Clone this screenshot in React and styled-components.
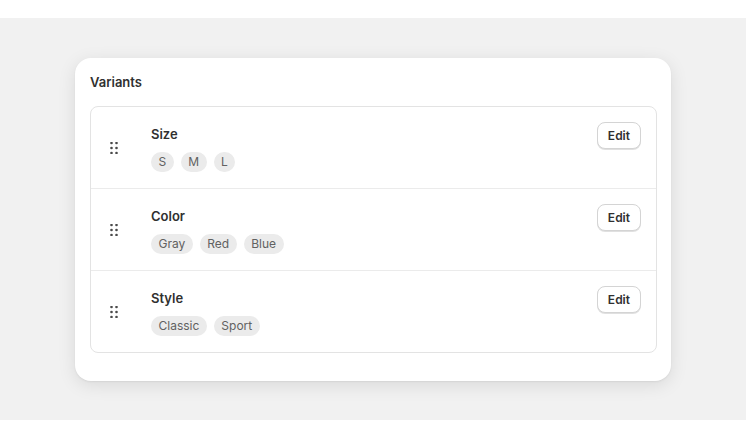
import React from "react";
import styled, { createGlobalStyle } from "styled-components";

const Global = createGlobalStyle`
  body { margin:0; background:#fff; font-family: Inter, "Noto Sans", sans-serif; }
`;
const Band = styled.div`
  margin-top:18px; height:402px; background:#f1f1f1;
  display:flex; justify-content:center; padding-top:40px; box-sizing:border-box;
`;
const Card = styled.div`
  width:596px; height:323px; box-sizing:border-box; background:#fff; border-radius:16px;
  box-shadow:0 4px 18px rgba(0,0,0,0.10), 0 1px 2px rgba(0,0,0,0.06);
  padding:15px 14px 0 15px;
`;
const Title = styled.div`font-size:13px; font-weight:600; color:#303030; line-height:16px; margin-top:1px; margin-bottom:16px;`;
const List = styled.div`border:1px solid #e3e3e3; border-radius:8px;`;
const Row = styled.div`
  height:81px; display:flex; align-items:center; padding:0 15px 0 19px;
  & + & { border-top:1px solid #ebebeb; }
`;
const Handle = styled.div`width:41px; display:flex; align-items:center;`;
const Body = styled.div`flex:1; display:flex; flex-direction:column; gap:10px; padding-top:3px;`;
const Name = styled.div`font-size:13px; font-weight:600; color:#303030; line-height:16px;`;
const Tags = styled.div`display:flex; gap:7px;`;
const Tag = styled.span`
  background:#ebebeb; color:#616161; font-size:12px; border-radius:10px;
  height:20px; line-height:20px; padding:0 7.5px;
`;
const Btn = styled.button`
  align-self:flex-start; margin-top:15px; font-family:inherit; font-size:12px; font-weight:600; color:#303030;
  background:#fff; border:1px solid #d4d4d4; border-radius:8px; height:27px; padding:0 10px;
  box-shadow:0 1px 0 rgba(0,0,0,0.12);
`;

const Dots = () => (
  <svg width="8" height="12" viewBox="0 0 8 12" fill="#4a4a4a">
    {[1, 6, 11].map((y) => [1.5, 6.5].map((x) => <circle key={x + "-" + y} cx={x} cy={y} r="1.3" />))}
  </svg>
);

const data = [
  ["Size", ["S", "M", "L"]],
  ["Color", ["Gray", "Red", "Blue"]],
  ["Style", ["Classic", "Sport"]],
];

export default function App() {
  return (
    <>
      <Global />
      <Band>
        <Card>
          <Title>Variants</Title>
          <List>
            {data.map(([n, t]) => (
              <Row key={n}>
                <Handle><Dots /></Handle>
                <Body>
                  <Name>{n}</Name>
                  <Tags>{t.map((x) => <Tag key={x}>{x}</Tag>)}</Tags>
                </Body>
                <Btn>Edit</Btn>
              </Row>
            ))}
          </List>
        </Card>
      </Band>
    </>
  );
}
